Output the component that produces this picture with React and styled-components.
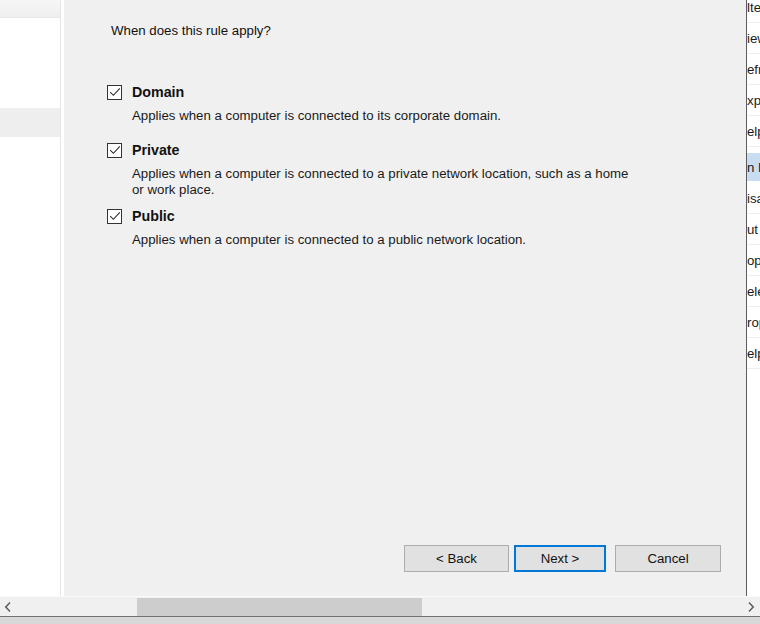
import React from "react";
import styled, { createGlobalStyle } from "styled-components";

const Global = createGlobalStyle`
  html, body { margin: 0; padding: 0; background: #ffffff; overflow: hidden; }
  body { font-family: "Liberation Sans", Arial, sans-serif; }
`;

const Screen = styled.div`
  width: 760px;
  height: 624px;
  display: flex;
  flex-direction: column;
  background: #ffffff;
`;

const Workspace = styled.div`
  height: 596px;
  display: flex;
`;

const TreePane = styled.div`
  width: 60px;
  border-right: 1px solid #e6e6e6;
  background: #ffffff;
  display: flex;
  flex-direction: column;
`;

const TreeHeader = styled.div`
  height: 17px;
  background: linear-gradient(#f6f6f6, #efefef);
  border-bottom: 1px solid #e8e8e8;
`;

const TreeItem = styled.div`
  height: 29px;
  margin-top: ${(p) => p.$offset || 0}px;
  background: ${(p) => (p.$selected ? "#eeeeee" : "transparent")};
`;

const Gutter = styled.div`
  width: 3px;
  background: #ffffff;
`;

const Dialog = styled.div`
  flex: 1;
  background: #f0f0f0;
  display: flex;
  flex-direction: column;
  padding: 23px 25px 24px 43px;
  color: #000000;
`;

const Prompt = styled.div`
  font-size: 13.25px;
  line-height: 16px;
  margin-left: 4px;
  color: #111111;
`;

const Options = styled.div`
  display: flex;
  flex-direction: column;
  margin-top: 44px;
`;

const Option = styled.div`
  display: flex;
  flex-direction: column;
  margin-bottom: ${(p) => p.$after}px;
`;

const OptionHead = styled.label`
  display: flex;
  align-items: center;
  height: 18px;
  gap: 10px;
`;

const Box = styled.span`
  width: 13px;
  height: 13px;
  border: 1px solid #333333;
  background: #ffffff;
  display: flex;
  align-items: center;
  justify-content: center;
  box-sizing: content-box;
`;

const OptionName = styled.span`
  font-weight: bold;
  font-size: 14.25px;
  color: #111111;
`;

const OptionText = styled.div`
  margin: 7px 0 0 25px;
  font-size: 13.25px;
  line-height: 16px;
  width: 505px;
  color: #1a1a1a;
`;

const Buttons = styled.div`
  margin-top: auto;
  display: flex;
  justify-content: flex-end;
`;

const Button = styled.button`
  width: ${(p) => p.$w}px;
  height: 27px;
  margin-left: ${(p) => p.$ml || 0}px;
  font-family: "Liberation Sans", Arial, sans-serif;
  font-size: 13.25px;
  color: #111111;
  background: #e1e1e1;
  border: 1px solid ${(p) => (p.$default ? "#0078d7" : "#adadad")};
  box-shadow: ${(p) => (p.$default ? "inset 0 0 0 1px #0078d7" : "none")};
  padding: 0;
`;

const ActionsPane = styled.div`
  width: 13px;
  border-left: 1px solid #5c5c5c;
  background: #ffffff;
  overflow: hidden;
  display: flex;
  flex-direction: column;
`;

const ActionList = styled.div`
  display: flex;
  flex-direction: column;
  margin-top: -8px;
`;

const Action = styled.div`
  height: ${(p) => (p.$selected ? 28 : 31)}px;
  margin-top: ${(p) => p.$gap || 0}px;
  box-sizing: border-box;
  display: flex;
  align-items: center;
  font-size: 13.25px;
  color: #1a1a1a;
  white-space: nowrap;
  background: ${(p) => (p.$selected ? "#c9ddf2" : "transparent")};
  border-bottom: ${(p) => (p.$selected ? "none" : "1px solid #eeeeee")};
`;

const HScroll = styled.div`
  height: 20px;
  background: #f0f0f0;
  border-top: 1px solid #fafafa;
  display: flex;
  align-items: center;
  box-sizing: border-box;
`;

const Arrow = styled.div`
  width: ${(p) => p.$w}px;
  height: 19px;
  display: flex;
  align-items: center;
  justify-content: center;
`;

const Track = styled.div`
  flex: 1;
  height: 19px;
  display: flex;
  align-items: center;
`;

const Thumb = styled.div`
  height: 18px;
  width: 285px;
  margin-left: 122px;
  background: #cdcdcd;
`;

const Taskbar = styled.div`
  flex: 1;
  background: #d8d8d8;
  border-top: 1px solid #707070;
`;

const Check = () => (
  <svg width="12" height="12" viewBox="0 0 12 12">
    <path d="M1.2 6.2 L4.4 9.3 L10.8 2.4" fill="none" stroke="#2b2b2b" strokeWidth="1.1" />
  </svg>
);

const Chevron = ({ dir }) => (
  <svg width="8" height="12" viewBox="0 0 8 12">
    <path
      d={dir === "left" ? "M6 1.5 L1.8 6 L6 10.5" : "M2 1.5 L6.2 6 L2 10.5"}
      fill="none"
      stroke="#606060"
      strokeWidth="1.6"
    />
  </svg>
);

const profiles = [
  {
    name: "Domain",
    text: "Applies when a computer is connected to its corporate domain.",
    after: 17,
  },
  {
    name: "Private",
    text: "Applies when a computer is connected to a private network location, such as a home or work place.",
    after: 9,
  },
  {
    name: "Public",
    text: "Applies when a computer is connected to a public network location.",
    after: 0,
  },
];

const actions = [
  { t: "lte" },
  { t: "iew" },
  { t: "efr" },
  { t: "xp" },
  { t: "elp" },
  { t: "n F", selected: true, gap: 6 },
  { t: "isa", gap: 2 },
  { t: "ut" },
  { t: "op" },
  { t: "ele" },
  { t: "rop" },
  { t: "elp" },
];

export default function App() {
  return (
    <Screen>
      <Global />
      <Workspace>
        <TreePane>
          <TreeHeader />
          <TreeItem $offset={90} $selected />
        </TreePane>
        <Gutter />
        <Dialog>
          <Prompt>When does this rule apply?</Prompt>
          <Options>
            {profiles.map((p) => (
              <Option key={p.name} $after={p.after}>
                <OptionHead>
                  <Box>
                    <Check />
                  </Box>
                  <OptionName>{p.name}</OptionName>
                </OptionHead>
                <OptionText>{p.text}</OptionText>
              </Option>
            ))}
          </Options>
          <Buttons>
            <Button $w={105}>&lt; Back</Button>
            <Button $w={92} $ml={5} $default>
              Next &gt;
            </Button>
            <Button $w={106} $ml={9}>
              Cancel
            </Button>
          </Buttons>
        </Dialog>
        <ActionsPane>
          <ActionList>
            {actions.map((a, i) => (
              <Action key={i} $selected={a.selected} $gap={a.gap}>
                {a.t}
              </Action>
            ))}
          </ActionList>
        </ActionsPane>
      </Workspace>
      <HScroll>
        <Arrow $w={15}>
          <Chevron dir="left" />
        </Arrow>
        <Track>
          <Thumb />
        </Track>
        <Arrow $w={18}>
          <Chevron dir="right" />
        </Arrow>
      </HScroll>
      <Taskbar />
    </Screen>
  );
}
